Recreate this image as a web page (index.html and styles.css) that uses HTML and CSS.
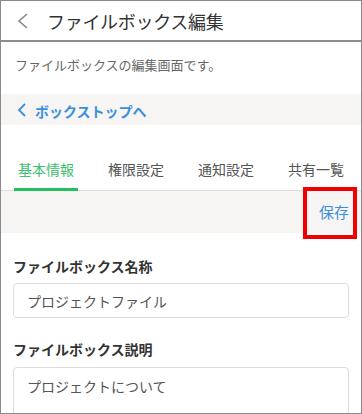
FILE: index.html
```html
<!DOCTYPE html>
<html lang="ja">
<head>
<meta charset="utf-8">
<link rel="stylesheet" href="styles.css">
</head>
<body>
<div class="frame">
  <header class="header">
    <svg class="hdr-chev" width="12" height="16" viewBox="0 0 12 16"><polyline points="10,1 2,8 10,15" fill="none" stroke="#8a8a8a" stroke-width="1.6"/></svg>
    <h1 class="title">ファイルボックス編集</h1>
  </header>
  <p class="desc">ファイルボックスの編集画面です。</p>
  <div class="backbar">
    <svg class="back-chev" width="10" height="14" viewBox="0 0 10 14"><polyline points="8,1 2,7 8,13" fill="none" stroke="#3a8fdc" stroke-width="1.8"/></svg>
    <span class="back-text">ボックストップへ</span>
  </div>
  <nav class="tabs">
    <span class="tab active">基本情報</span>
    <span class="tab">権限設定</span>
    <span class="tab">通知設定</span>
    <span class="tab">共有一覧</span>
  </nav>
  <div class="toolbar">
    <span class="save">保存</span>
  </div>
  <div class="form">
    <div class="label">ファイルボックス名称</div>
    <div class="field">プロジェクトファイル</div>
    <div class="label second">ファイルボックス説明</div>
    <div class="field area">プロジェクトについて</div>
  </div>
  <div class="highlight"></div>
</div>
</body>
</html>
```
FILE: styles.css
```css
* { box-sizing: border-box; }
html, body { margin: 0; padding: 0; background: #fff; }
body { font-family: "Noto Sans CJK JP", "Noto Sans", sans-serif; }
.frame {
  position: relative;
  width: 362px;
  height: 414px;
  border: 1px solid #8a8a8a;
  overflow: hidden;
  background: #fff;
}
.header {
  height: 41px;
  border-bottom: 2px solid #8c8c8c;
  display: flex;
  align-items: center;
  padding-left: 16px;
}
.hdr-chev { flex: none; margin-right: 18px; }
.title {
  margin: 0;
  font-size: 18px;
  font-weight: 400;
  color: #333;
  line-height: 24px;
  letter-spacing: -0.3px;
}
.desc {
  margin: 0;
  padding: 13px 14px 19px;
  font-size: 13px;
  line-height: 20px;
  color: #666;
}
.backbar {
  height: 31px;
  background: #f6f5f3;
  display: flex;
  align-items: center;
  padding-left: 16px;
}
.back-chev { flex: none; margin-right: 8px; margin-top: 1px; }
.back-text {
  font-size: 14px;
  font-weight: 700;
  color: #3a8fdc;
  line-height: 20px;
  padding-top: 2px;
}
.tabs {
  display: grid;
  grid-template-columns: repeat(4, 90px);
  padding-top: 34px;
  border-bottom: 1px solid #dedede;
}
.tab {
  justify-self: center;
  width: 64px;
  text-align: center;
  font-size: 14px;
  line-height: 20px;
  color: #555;
  padding-bottom: 9px;
  border-bottom: 3px solid transparent;
  margin-bottom: -1px;
}
.tab.active {
  color: #3cbf6e;
  border-bottom-color: #22c05f;
}
.toolbar {
  height: 42px;
  background: #f6f5f3;
  display: flex;
  align-items: center;
  justify-content: flex-end;
  padding-right: 12px;
}
.save {
  font-size: 15px;
  line-height: 20px;
  color: #3a8fdc;
  font-weight: 400;
}
.form {
  padding: 23px 12px 0 12px;
}
.label {
  font-size: 14px;
  font-weight: 700;
  color: #333;
  line-height: 20px;
  margin-bottom: 7px;
}
.label.second { margin-top: 21px; margin-bottom: 8px; }
.field {
  width: 336px;
  height: 35px;
  border: 1px solid #dcdcdc;
  border-radius: 4px;
  padding: 0 13px;
  display: flex;
  align-items: center;
  font-size: 14px;
  color: #555;
  line-height: 20px;
}
.field.area {
  height: 80px;
  align-items: flex-start;
  padding-top: 8px;
}
.highlight {
  position: absolute;
  left: 302px;
  top: 186px;
  width: 54px;
  height: 52px;
  border: 4px solid #f00000;
}
```
